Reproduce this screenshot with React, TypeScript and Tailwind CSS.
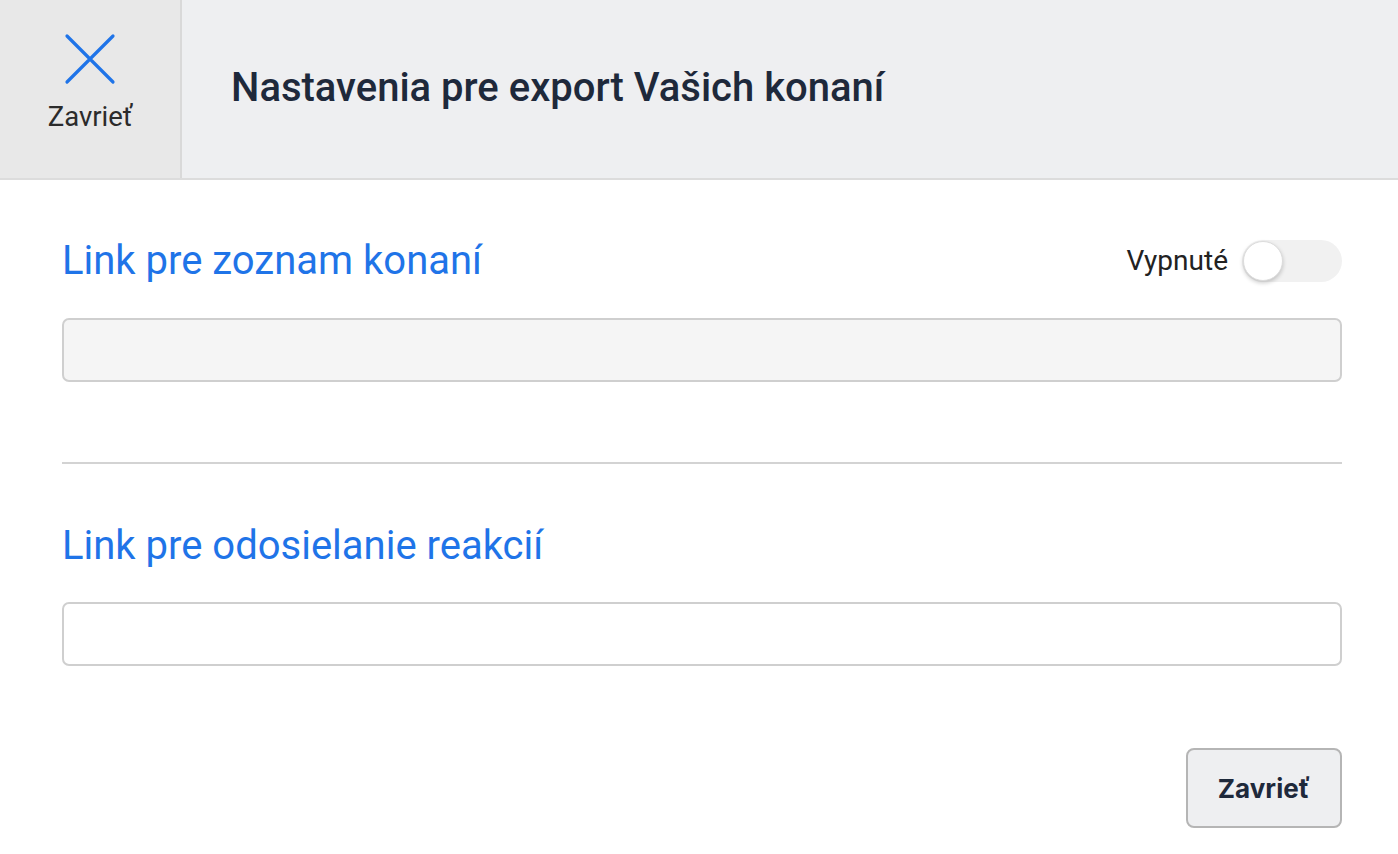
import React from "react";

export default function App() {
  return (
    <div className="w-[1398px] h-[854px] bg-white overflow-hidden" style={{ fontFamily: "Roboto, 'Noto Sans', sans-serif" }}>
      <header className="flex h-[180px] bg-[#eeeff1] border-b-2 border-[#dcdcdc]">
        <button className="w-[182px] shrink-0 bg-[#e8e8e8] border-r-2 border-[#d9d9d9] flex flex-col items-center pt-[33px]">
          <svg width="52" height="52" viewBox="0 0 52 52">
            <path d="M3 3 L49 49 M49 3 L3 49" stroke="#1f74e8" strokeWidth="3.2" strokeLinecap="round" fill="none" />
          </svg>
          <span className="mt-[16px] text-[27.5px] leading-[32px] text-[#2b2b2b]">Zavrieť</span>
        </button>
        <div className="flex items-center pl-[49px] pb-[2px]">
          <h1 className="text-[40px] font-medium text-[#1e293b] leading-none">Nastavenia pre export Vašich konaní</h1>
        </div>
      </header>
      <main className="pl-[62px] pr-[56px] pt-[57px]">
        <div className="flex items-center justify-between h-[48px]">
          <h2 className="text-[40px] leading-[48px] text-[#1f74e8]">Link pre zoznam konaní</h2>
          <div className="flex items-center gap-[14px]">
            <span className="text-[28px] text-[#222]">Vypnuté</span>
            <div className="w-[100px] h-[42px] rounded-full bg-[#f1f1f1] relative">
              <div className="absolute left-[1px] top-[1px] w-[40px] h-[40px] rounded-full bg-white border border-[#dcdcdc] shadow-[0_2px_4px_rgba(0,0,0,0.2)]" />
            </div>
          </div>
        </div>
        <div className="mt-[33px] h-[64px] rounded-[7px] border-2 border-[#cfcfcf] bg-[#f5f5f5]" />
        <div className="mt-[80px] h-[2px] bg-[#d3d3d3]" />
        <h2 className="mt-[58px] text-[40px] leading-[48px] text-[#1f74e8]">Link pre odosielanie reakcií</h2>
        <div className="mt-[32px] h-[64px] rounded-[7px] border-2 border-[#cfcfcf] bg-white" />
        <div className="mt-[82px] flex justify-end">
          <button className="w-[156px] h-[80px] rounded-[8px] border-2 border-[#b5b5b5] bg-[#eeeff1] text-[26px] font-bold text-[#1e293b]" style={{ fontFamily: "Inter, Roboto, sans-serif" }}>
            Zavrieť
          </button>
        </div>
      </main>
    </div>
  );
}
